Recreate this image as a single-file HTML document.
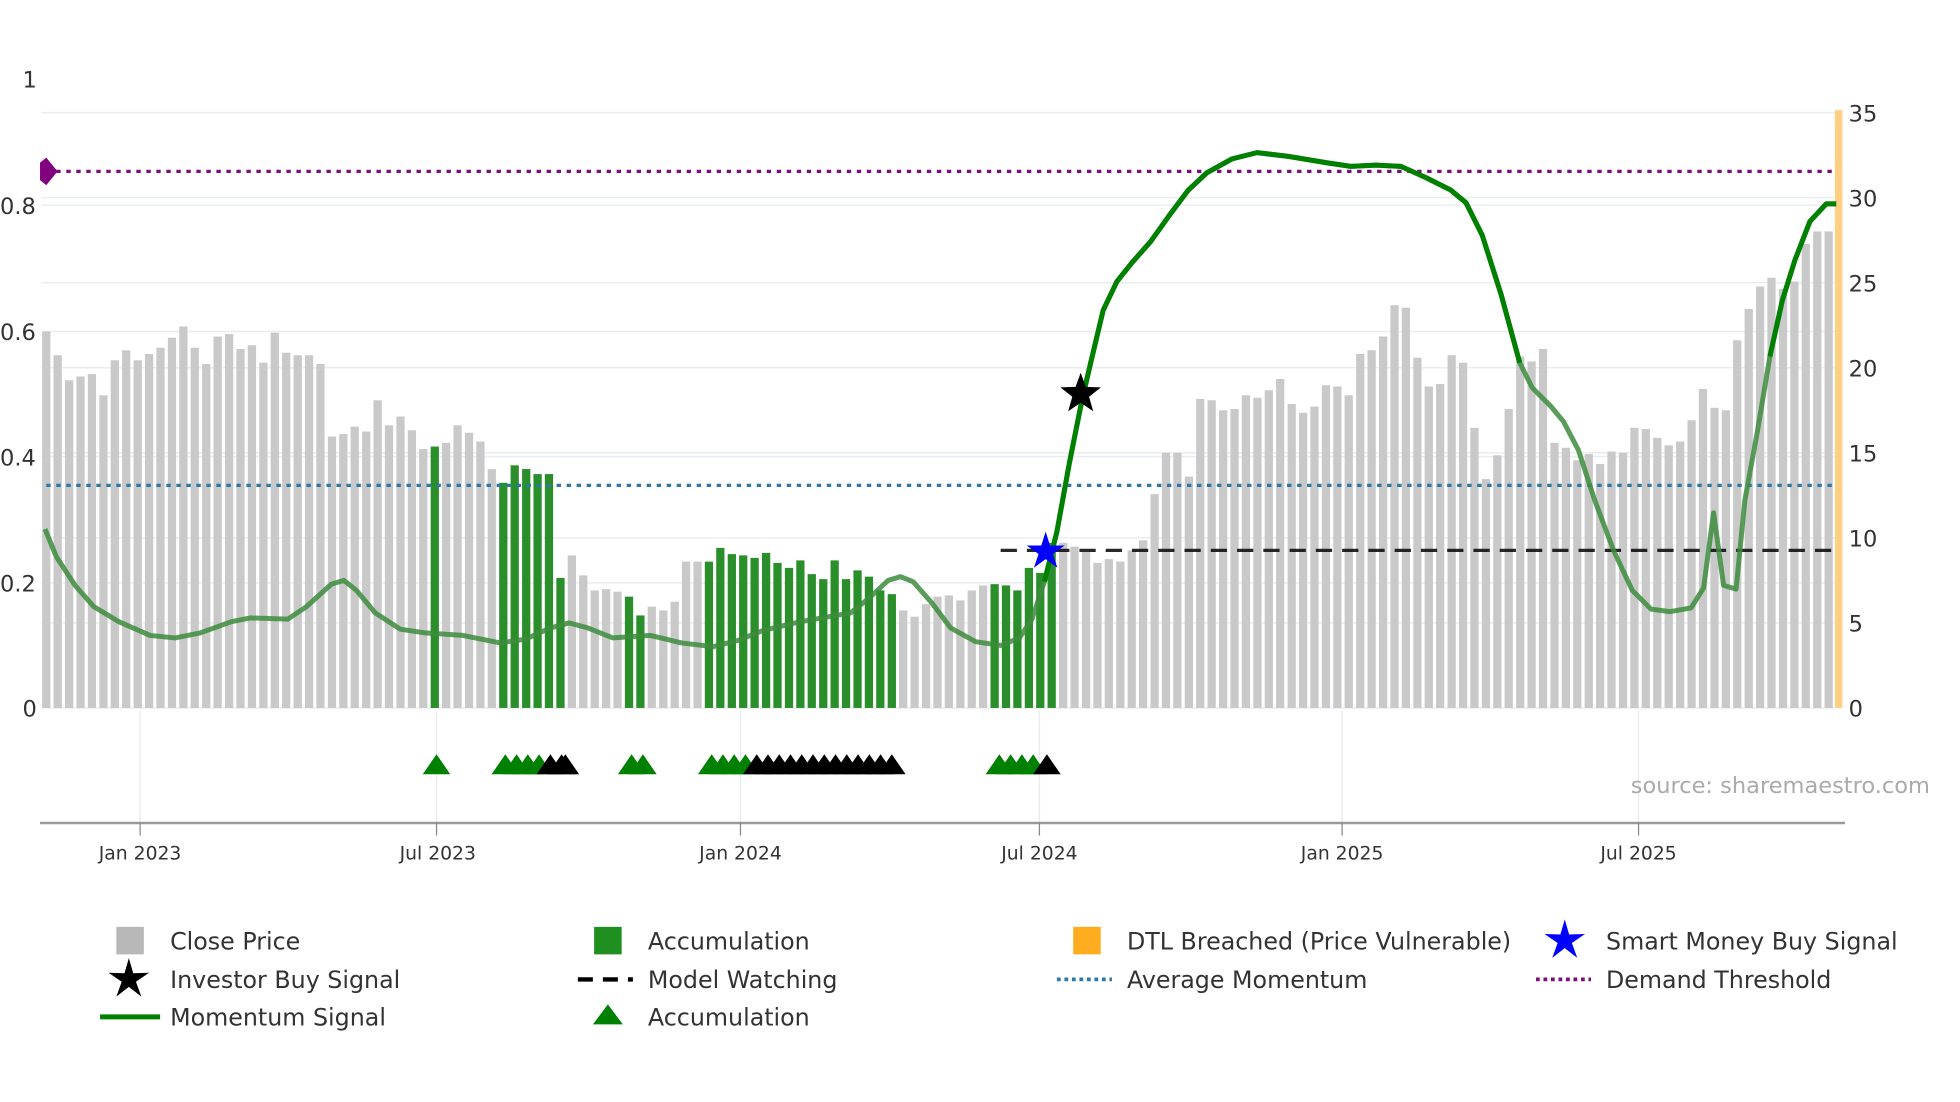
<!DOCTYPE html>
<html><head><meta charset="utf-8">
<style>
html,body{margin:0;padding:0;background:#fff;}
svg{display:block;}
text{font-family:"DejaVu Sans","Liberation Sans",sans-serif;}
</style></head>
<body>
<svg id="c" width="1960" height="1102" viewBox="0 0 1567 881" xmlns="http://www.w3.org/2000/svg">
<g id="grid" stroke="#e9edf2" stroke-width="1.2"></g>
<g id="bars"></g>
<rect x="1467" y="88" width="6" height="478" fill="#fdd083"/>
<line x1="37" y1="137" x2="1467" y2="137" stroke="#7b0f7b" stroke-width="2.6" stroke-dasharray="3.5,4.5"/>
<line x1="37" y1="388" x2="1467" y2="388" stroke="#2f77a8" stroke-width="2.6" stroke-dasharray="3.5,4.5"/>
<line x1="800" y1="440" x2="1470" y2="440" stroke="#111" stroke-width="2.6" stroke-dasharray="13,8" opacity="0.9"/>
<polygon points="32,130 37,126 46,137 37,148 32,144" fill="#800080"/>
<g id="lines"></g>
<path id="bstar" fill="#0000ff"/>
<path id="kstar" fill="#000"/>
<g id="tri"></g>
<g id="xax"></g>
<g fill="#333" font-size="18">
<text x="18" y="70">1</text>
<text x="0" y="171">0.8</text>
<text x="0" y="272">0.6</text>
<text x="0" y="372">0.4</text>
<text x="0" y="473">0.2</text>
<text x="18" y="573">0</text>
<text x="1478" y="97">35</text>
<text x="1478" y="165">30</text>
<text x="1478" y="233">25</text>
<text x="1478" y="301">20</text>
<text x="1478" y="369">15</text>
<text x="1478" y="437">10</text>
<text x="1478" y="505">5</text>
<text x="1478" y="573">0</text>
</g>
<text x="1543" y="634" text-anchor="end" fill="#aaa" font-size="18">source: sharemaestro.com</text>
<g fill="#333" font-size="15" text-anchor="middle">
<text x="112" y="687">Jan 2023</text>
<text x="350" y="687">Jul 2023</text>
<text x="592" y="687">Jan 2024</text>
<text x="831" y="687">Jul 2024</text>
<text x="1073" y="687">Jan 2025</text>
<text x="1310" y="687">Jul 2025</text>
</g>
<g fill="#333" font-size="19">
<rect x="93" y="741" width="22" height="22" fill="#b8b8b8"/>
<text x="136" y="759">Close Price</text>
<rect x="475" y="741" width="22" height="22" fill="#1f8f1f"/>
<text x="518" y="759">Accumulation</text>
<rect x="858" y="741" width="22" height="22" fill="#ffad1f"/>
<text x="901" y="759">DTL Breached (Price Vulnerable)</text>
<path id="lgb" fill="#0000ff"/>
<text x="1284" y="759">Smart Money Buy Signal</text>
<path id="lgk" fill="#000"/>
<text x="136" y="790">Investor Buy Signal</text>
<line x1="462" y1="783" x2="506" y2="783" stroke="#000" stroke-width="3.5" stroke-dasharray="12,8"/>
<text x="518" y="790">Model Watching</text>
<line x1="845" y1="783" x2="889" y2="783" stroke="#2f77a8" stroke-width="3" stroke-dasharray="3,3"/>
<text x="901" y="790">Average Momentum</text>
<line x1="1228" y1="783" x2="1272" y2="783" stroke="#7b0f7b" stroke-width="3" stroke-dasharray="3,3"/>
<text x="1284" y="790">Demand Threshold</text>
<line x1="80" y1="813" x2="128" y2="813" stroke="#008000" stroke-width="4"/>
<text x="136" y="820">Momentum Signal</text>
<polygon points="474,819 486,803 498,819" fill="#008000"/>
<text x="518" y="820">Accumulation</text>
</g>
</svg>
<script>
(function(){
var NS="http://www.w3.org/2000/svg";
function el(p,t,a){var e=document.createElementNS(NS,t);for(var k in a)e.setAttribute(k,a[k]);p.appendChild(e);return e;}
var g=document.getElementById('grid');
[164,265,365,466,566,90,158,226,294,362,430,498].forEach(function(y){el(g,'line',{x1:33,x2:1467,y1:y,y2:y});});
[112,349,592,831,1073,1310].forEach(function(x){el(g,'line',{x1:x,x2:x,y1:568,y2:658});});
var pts=[[37,265],[46,284],[55,304],[64,301],[73,299],[82,316],[91,288],[100,280],[109,288],[118,283],[127,278],[136,270],[145,261],[154,278],[163,291],[172,269],[181,267],[190,279],[199,276],[208,290],[217,266],[226,282],[235,284],[244,284],[253,291],[262,349],[271,347],[280,341],[289,345],[298,320],[307,340],[316,333],[325,344],[334,359],[343,361],[352,357],[361,354],[370,340],[379,346],[388,353],[397,375],[406,386],[415,372],[424,375],[433,379],[442,379],[451,462],[460,444],[469,460],[478,472],[487,471],[496,473],[505,477],[514,492],[523,485],[532,488],[541,481],[550,449],[559,449],[568,449],[577,438],[586,443],[595,444],[604,446],[613,442],[622,450],[631,454],[640,448],[649,459],[658,463],[667,448],[676,463],[685,456],[694,461],[703,472],[712,475],[721,488],[730,493],[739,483],[748,477],[757,476],[766,480],[775,472],[784,468],[793,467],[802,468],[811,472],[820,454],[829,458],[838,434],[847,434],[856,437],[865,441],[874,450],[883,447],[892,449],[901,440],[910,432],[919,395],[928,362],[937,362],[946,381],[955,333],[964,319],[973,320],[982,328],[991,327],[1000,316],[1009,318],[1018,312],[1027,303],[1036,323],[1045,330],[1054,325],[1063,308],[1072,309],[1081,316],[1090,283],[1099,280],[1108,269],[1117,244],[1126,246],[1135,286],[1144,309],[1153,307],[1162,284],[1171,290],[1180,342],[1189,383],[1198,364],[1207,327],[1216,285],[1225,289],[1234,279],[1243,354],[1252,358],[1261,368],[1270,363],[1279,371],[1288,361],[1297,362],[1306,342],[1315,343],[1324,350],[1333,356],[1342,353],[1351,336],[1360,311],[1369,326],[1378,328],[1387,272],[1396,247],[1405,229],[1414,222],[1423,231],[1432,225],[1441,195],[1450,185],[1462,185]];
function topAt(x){for(var i=0;i<pts.length-1;i++){if(x<=pts[i+1][0]){var a=pts[i],b=pts[i+1];var t=(x-a[0])/(b[0]-a[0]);return t<0.5?a[1]:b[1];}}return pts[pts.length-1][1];}
var greens=[[345,353],[399,453],[500,519],[564,721],[795,841]];
var bg=document.getElementById('bars');
var N=157;for(var i=0;i<N;i++){var bx=37+i*(1462-37)/(N-1);var ty=topAt(bx);var gr=greens.some(function(r){return bx>=r[0]&&bx<=r[1];});
el(bg,'rect',{x:(bx-3.3).toFixed(1),y:ty,width:6.6,height:566-ty,fill:gr?'#2a8f2a':'#c9c9c9'});}
var m=[[36,423],[45,445],[60,468],[75,485],[95,497],[120,508],[140,510],[160,506],[185,497],[200,494],[230,495],[245,485],[265,467],[275,464],[285,472],[300,490],[320,503],[340,506],[370,508],[400,514],[420,511],[440,502],[455,498],[470,502],[490,510],[520,508],[545,514],[570,517],[590,512],[610,504],[640,497],[680,490],[695,478],[710,464],[720,461],[730,465],[745,482],[760,502],[780,513],[800,516],[815,510],[825,495],[835,465],[845,425],[855,370],[865,320],[872,290],[882,248],[893,225],[905,210],[920,193],[935,172],[950,152],[965,138],[985,127],[1005,122],[1030,125],[1060,130],[1080,133],[1100,132],[1120,133],[1140,142],[1160,152],[1172,162],[1185,188],[1200,235],[1215,290],[1225,310],[1240,325],[1250,337],[1262,360],[1275,400],[1290,440],[1305,472],[1320,487],[1335,489],[1352,486],[1362,470],[1370,410],[1378,468],[1388,471],[1395,400],[1405,345],[1415,285],[1425,240],[1435,208],[1447,177],[1460,163],[1468,163]];
function pth(a){return 'M'+a.map(function(p){return p[0]+','+p[1];}).join('L');}
var lg=document.getElementById('lines');
el(lg,'path',{d:pth(m),fill:'none',stroke:'#3d8c3d','stroke-width':4,opacity:0.85,'stroke-linejoin':'round'});
el(lg,'path',{d:pth(m.filter(function(p){return p[0]>=835&&p[0]<=1215;})),fill:'none',stroke:'#008000','stroke-width':4,'stroke-linejoin':'round'});
el(lg,'path',{d:pth(m.filter(function(p){return p[0]>=1415;})),fill:'none',stroke:'#008000','stroke-width':4,'stroke-linejoin':'round'});
function star(cx,cy,R,r){var s='';for(var i=0;i<10;i++){var a=-Math.PI/2+i*Math.PI/5;var rr=i%2?r:R;s+=(i?'L':'M')+(cx+rr*Math.cos(a)).toFixed(1)+','+(cy+rr*Math.sin(a)).toFixed(1);}return s+'Z';}
document.getElementById('kstar').setAttribute('d',star(864,315,17,7));
document.getElementById('bstar').setAttribute('d',star(836,441,16,6));
document.getElementById('lgb').setAttribute('d',star(1251,752,17,6));
document.getElementById('lgk').setAttribute('d',star(103,783,17,6));
var tg=document.getElementById('tri');
function tri(x,c){el(tg,'polygon',{points:(x-11)+',619 '+x+',603 '+(x+11)+',619',fill:c});}
[349,404,413,422,431,505,514,569,578,587,596,799,808,817,826].forEach(function(x){tri(x,'#008000');});
[440,449,452].forEach(function(x){tri(x,'#000');});
for(var x=605;x<=719;x+=9)tri(x,'#000');
tri(837,'#000');
var xa=document.getElementById('xax');
el(xa,'line',{x1:32,x2:1475,y1:658,y2:658,stroke:'#999','stroke-width':2});
[112,349,592,831,1073,1310].forEach(function(x){el(xa,'line',{x1:x,x2:x,y1:658,y2:668,stroke:'#888','stroke-width':1});});
})();
</script>
</body></html>
